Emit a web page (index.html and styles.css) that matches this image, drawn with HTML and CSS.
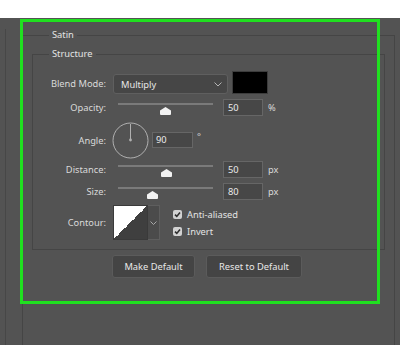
FILE: index.html
```html
<!DOCTYPE html>
<html>
<head>
<meta charset="utf-8">
<link rel="stylesheet" href="styles.css">
</head>
<body>
<div class="page">
  <div class="topbar"></div>
  <div class="panel">
    <div class="area">
      <fieldset class="group satin">
        <legend>Satin</legend>
        <fieldset class="group structure">
          <legend>Structure</legend>

          <div class="row row-blend">
            <span class="lbl">Blend Mode:</span>
            <div class="select">
              <span>Multiply</span>
              <svg class="chev" width="8" height="5" viewBox="0 0 8 5"><polyline points="0.5,0.5 4,4 7.5,0.5" fill="none" stroke="#b4b4b4" stroke-width="1"/></svg>
            </div>
            <div class="color-swatch"></div>
          </div>

          <div class="row row-field">
            <span class="lbl">Opacity:</span>
            <div class="slider"><div class="track"></div><span class="thumb" style="left:42px"></span></div>
            <div class="num">50</div><span class="unit">%</span>
          </div>

          <div class="row row-angle">
            <span class="lbl">Angle:</span>
            <svg class="dial" width="37" height="37" viewBox="0 0 37 37">
              <circle cx="18.5" cy="18.5" r="17.5" fill="none" stroke="#b0b0b0" stroke-width="1"/>
              <line x1="18.5" y1="2" x2="18.5" y2="17.5" stroke="#b0b0b0" stroke-width="1"/>
              <circle cx="18.5" cy="18" r="1.4" fill="#b0b0b0"/>
            </svg>
            <div class="num num-angle">90</div><span class="unit deg">°</span>
          </div>

          <div class="row row-field row-distance">
            <span class="lbl">Distance:</span>
            <div class="slider"><div class="track"></div><span class="thumb" style="left:43px"></span></div>
            <div class="num">50</div><span class="unit">px</span>
          </div>

          <div class="row row-field row-size">
            <span class="lbl">Size:</span>
            <div class="slider"><div class="track"></div><span class="thumb" style="left:29px"></span></div>
            <div class="num">80</div><span class="unit">px</span>
          </div>

          <div class="row row-contour">
            <span class="lbl">Contour:</span>
            <div class="contour">
              <div class="curve"></div>
              <div class="curve-drop">
                <svg width="7" height="4" viewBox="0 0 7 4"><polyline points="0.5,0.5 3.5,3.5 6.5,0.5" fill="none" stroke="#a8a8a8" stroke-width="1"/></svg>
              </div>
            </div>
            <div class="checks">
              <div class="check"><span class="box"><svg width="9" height="9" viewBox="0 0 9 9"><polyline points="2,4.6 3.8,6.4 7,2.6" fill="none" stroke="#2e2e2e" stroke-width="1.6"/></svg></span><span>Anti-aliased</span></div>
              <div class="check"><span class="box"><svg width="9" height="9" viewBox="0 0 9 9"><polyline points="2,4.6 3.8,6.4 7,2.6" fill="none" stroke="#2e2e2e" stroke-width="1.6"/></svg></span><span>Invert</span></div>
            </div>
          </div>
        </fieldset>

        <div class="buttons">
          <button class="btn btn-make">Make Default</button>
          <button class="btn btn-reset">Reset to Default</button>
        </div>
      </fieldset>
    </div>
  </div>
  <div class="highlight"></div>
</div>
</body>
</html>
```

FILE: styles.css
```css
* { box-sizing: border-box; }
html, body { margin: 0; padding: 0; }
body {
  width: 400px;
  height: 345px;
  overflow: hidden;
  background: #ffffff;
  font-family: "Noto Sans", "Open Sans", sans-serif;
  font-size: 9.3px;
  color: #dadada;
}
.page { position: relative; width: 400px; height: 345px; }
.topbar { height: 18px; background: #ffffff; }
.panel {
  height: 327px;
  background: #535353;
  padding: 12px 0 0 5px;
  overflow: hidden;
}
.area {
  height: 400px;
  border-left: 1px solid #474747;
  padding-left: 16px;
}
.group {
  margin: 0;
  padding: 0;
  border: 1px solid #454545;
  min-width: 0;
}
.group > legend {
  padding: 0 3px;
  line-height: 12px;
  height: 12px;
  color: #e4e4e4;
}
.satin {
  width: 373px;
  height: 400px;
  margin-top: -1px;
  padding: 0 9px;
}
.satin > legend { margin-left: 17px; }
.structure {
  margin-top: 7px;
  padding: 11px 0 9px 0;
}
.structure > legend { margin-left: 16px; }

.row { display: flex; align-items: center; }
.lbl {
  width: 73px;
  margin-right: 7px;
  text-align: right;
  flex: none;
}
.row-blend { height: 23px; align-items: flex-end; }
.row-blend .lbl { line-height: 20px; }
.select {
  width: 115px;
  height: 20px;
  background: #464646;
  border: 1px solid #5f5f5f;
  border-radius: 3px;
  display: flex;
  align-items: center;
  justify-content: space-between;
  padding: 0 5px 0 7px;
  color: #e6e6e6;
}
.color-swatch {
  width: 36px;
  height: 23px;
  margin-left: 4px;
  background: #000;
  border: 1px solid #3c3c3c;
}

.row-field { height: 17px; margin-top: 5px; }
.slider {
  position: relative;
  width: 95px;
  height: 13px;
  margin-left: 5px;
  align-self: flex-start;
  margin-top: 4px;
}
.track { height: 2px; background: #7a7a7a; }
.thumb {
  position: absolute;
  top: 4px;
  width: 11px;
  height: 8px;
  background: #f2f2f2;
  clip-path: polygon(50% 0, 100% 45%, 100% 100%, 0 100%, 0 45%);
  border-radius: 1px;
}
.num {
  width: 40px;
  height: 17px;
  margin-left: 10px;
  background: #474747;
  border: 1px solid #666666;
  color: #ebebeb;
  padding-left: 4px;
  line-height: 15px;
}
.unit { margin-left: 5px; }

.row-angle { height: 36px; margin-top: 6px; }
.dial { margin-left: -1px; flex: none; }
.num-angle { width: 41px; height: 16px; margin-left: 3px; line-height: 14px; padding-left: 3px; }
.deg { margin-left: 4px; align-self: flex-start; margin-top: 8px; }

.row-distance { margin-top: 3px; }
.row-size { margin-top: 5px; }

.row-contour { height: 35px; margin-top: 5px; }
.contour { display: flex; height: 35px; }
.curve {
  width: 35px;
  height: 35px;
  background: linear-gradient(to bottom right, #ffffff 50%, #3f3f3f 50%);
  border: 1px solid #3a3a3a;
}
.curve-drop {
  width: 12px;
  height: 35px;
  background: #4b4b4b;
  border: 1px solid #5e5e5e;
  border-left: none;
  display: flex;
  align-items: center;
  justify-content: center;
}
.checks {
  margin-left: 13px;
  display: flex;
  flex-direction: column;
  gap: 1px;
}
.check {
  display: flex;
  align-items: center;
  height: 16px;
  color: #e4e4e4;
}
.box {
  width: 9px;
  height: 9px;
  background: #d2d2d2;
  border-radius: 2px;
  margin-right: 5px;
  display: flex;
}

.buttons {
  display: flex;
  gap: 11px;
  margin-top: 5px;
  padding-left: 80px;
}
.btn {
  height: 23px;
  background: #444444;
  border: 1px solid #5b5b5b;
  border-radius: 3px;
  color: #e8e8e8;
  font-family: inherit;
  font-size: 9.3px;
  padding: 0;
}
.btn-make { width: 83px; }
.btn-reset { width: 96px; }

.highlight {
  position: absolute;
  left: 20px;
  top: 19px;
  width: 360px;
  height: 285px;
  border: 3px solid #20e020;
}
```
